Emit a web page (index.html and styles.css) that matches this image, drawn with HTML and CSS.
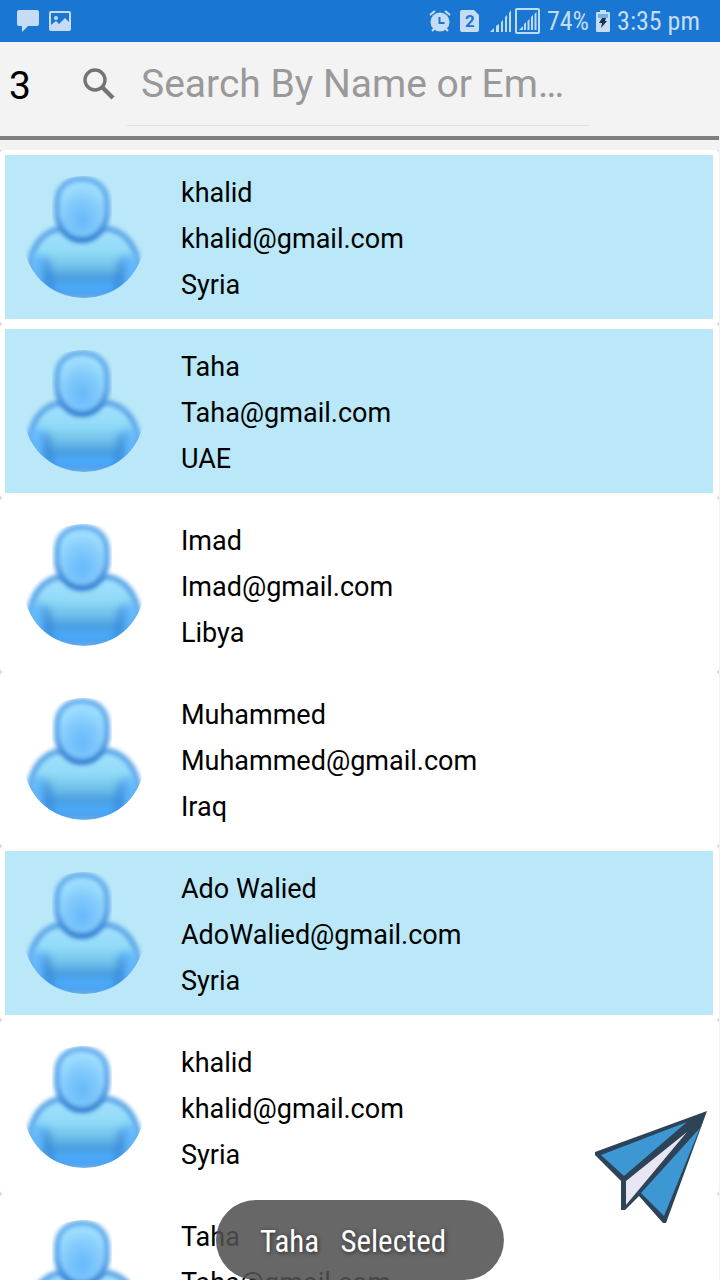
FILE: index.html
```
<!DOCTYPE html>
<html lang="en">
<head>
<meta charset="utf-8">
<meta name="viewport" content="width=device-width, initial-scale=1">
<title>Contacts</title>
<link rel="stylesheet" href="styles.css">
</head>
<body>
<svg class="sprite" width="0" height="0" aria-hidden="true">
  <defs>
    <linearGradient id="bodyFill" x1="0" y1="0" x2="0" y2="1">
      <stop offset="0" stop-color="#a4e2ff"/>
      <stop offset=".35" stop-color="#90daf7"/>
      <stop offset=".55" stop-color="#70c0ea"/>
      <stop offset=".72" stop-color="#4a9fe0"/>
      <stop offset=".88" stop-color="#4dabfc"/>
      <stop offset="1" stop-color="#3f93e6"/>
    </linearGradient>
    <radialGradient id="headFill" cx=".5" cy=".68" r=".62">
      <stop offset="0" stop-color="#66b9fb"/>
      <stop offset=".5" stop-color="#80c8fb"/>
      <stop offset="1" stop-color="#a2e2ff"/>
    </radialGradient>
    <linearGradient id="headEdge" x1="0" y1="0" x2="0" y2="1">
      <stop offset="0" stop-color="#68b0ee"/>
      <stop offset=".6" stop-color="#5ea8ea"/>
      <stop offset="1" stop-color="#2f7ed0"/>
    </linearGradient>
    <filter id="soft" x="-10%" y="-10%" width="120%" height="120%"><feGaussianBlur stdDeviation="2"/></filter>
    <filter id="softer" x="-80%" y="-30%" width="260%" height="160%"><feGaussianBlur stdDeviation="4"/></filter>
    <clipPath id="round"><circle cx="61" cy="61" r="61"/></clipPath>
    <symbol id="avatar" viewBox="0 0 122 122">
      <g clip-path="url(#round)">
        <path filter="url(#soft)" fill="url(#bodyFill)" stroke="#5fa8e8" stroke-width="6" d="M36 53C20 56 9 70 7 88c-1 17 1 33 9 33h91c7 0 9-16 8-33-2-18-13-32-29-35z"/>
        <path filter="url(#softer)" fill="none" stroke="#64b8ff" stroke-width="12" d="M15 112V80M106 112V80"/>
        <path filter="url(#softer)" fill="none" stroke="#2f7fd2" stroke-width="5" d="M28 126L23 84M94 126L99 84"/>
        <path filter="url(#soft)" stroke="#3184da" stroke-width="3" d="M28 121h66"/>
        <path filter="url(#soft)" fill="url(#headFill)" stroke="url(#headEdge)" stroke-width="6" d="M59 3C43 3 34 13 34 27v12c2 15 12 25 25 25s23-10 25-25V27C84 13 75 3 59 3z"/>
      </g>
    </symbol>
  </defs>
</svg>

<div class="screen">
  <header class="status">
    <div class="status-group">
      <svg width="24" height="24" viewBox="0 0 24 24" fill="#c5dcf4"><path d="M3 1h18a2 2 0 0 1 2 2v12a2 2 0 0 1-2 2H12l-6 6v-6H3a2 2 0 0 1-2-2V3a2 2 0 0 1 2-2z"/></svg>
      <svg width="22" height="20" viewBox="0 0 22 20"><rect x="1" y="1" width="20" height="18" rx="1" fill="none" stroke="#c5dcf4" stroke-width="2"/><circle cx="7" cy="7" r="2" fill="#c5dcf4"/><path fill="#c5dcf4" d="M2 14l5-4 3 3 6-6 4 4v7H2z"/></svg>
    </div>
    <div class="status-group status-right">
      <svg width="22" height="24" viewBox="0 0 22 24"><circle cx="11" cy="13" r="9.5" fill="#c5dcf4"/><path d="M1 6l5-4M21 6l-5-4M3 22l3-3M19 22l-3-3" stroke="#c5dcf4" stroke-width="2.2"/><path d="M10.500 8v6h5" fill="none" stroke="#1976d2" stroke-width="2"/></svg>
      <svg class="sim" width="20" height="22" viewBox="0 0 20 22"><path fill="#c5dcf4" d="M2 0h12l5 5v15a2 2 0 0 1-2 2H2a2 2 0 0 1-2-2V2a2 2 0 0 1 2-2z"/><text x="10" y="17" text-anchor="middle">2</text></svg>
      <svg class="signal" width="22" height="22" viewBox="0 0 22 22" fill="#bcdcf8"><path d="M0 22l4-4v4zM6 16l3-2v8H6zM11 12l2-2v12h-2zM15 7l2-2v17h-2zM19 3l2-3v22h-2z"/></svg>
      <svg width="25" height="26" viewBox="0 0 25 26"><rect x="1" y="1" width="23" height="24" rx="1" fill="none" stroke="#bcdcf8" stroke-width="2"/><path fill="#bcdcf8" d="M4 22l4-4v4zM9 16l2-2v8H9zM12.500 13l2-2v11h-2zM16 9l2-2v15h-2zM19.500 6l2-2v18h-2z"/></svg>
      <span>74%</span>
      <svg width="14" height="22" viewBox="0 0 14 22"><path fill="#c5dcf4" d="M4 0h6v2h3a1 1 0 0 1 1 1v18a1 1 0 0 1-1 1H1a1 1 0 0 1-1-1V3a1 1 0 0 1 1-1h3z"/><path fill="#74afe6" d="M2 4h10v4H2z"/><path fill="#17304f" d="M6 8h4l-1 3h2l-6 7 1-5H3z"/></svg>
      <span>3:35 pm</span>
    </div>
  </header>

  <form class="toolbar" role="search">
    <span class="count">3</span>
    <label class="search-icon" for="search" aria-label="Search"><svg width="32" height="32" viewBox="0 0 32 32" fill="none" stroke="#747474"><circle cx="12" cy="12" r="10" stroke-width="3.400"/><path d="M19 19l11 11" stroke-width="4.400"/></svg></label>
    <input class="search" id="search" type="text" placeholder="Search By Name or Em…">
  </form>

  <main class="list">
    <article class="card selected"><svg class="avatar"><use href="#avatar"/></svg><div class="info"><p>khalid</p><p>khalid@gmail.com</p><p>Syria</p></div></article>
    <article class="card selected"><svg class="avatar"><use href="#avatar"/></svg><div class="info"><p>Taha</p><p>Taha@gmail.com</p><p>UAE</p></div></article>
    <article class="card"><svg class="avatar"><use href="#avatar"/></svg><div class="info"><p>Imad</p><p>Imad@gmail.com</p><p>Libya</p></div></article>
    <article class="card"><svg class="avatar"><use href="#avatar"/></svg><div class="info"><p>Muhammed</p><p>Muhammed@gmail.com</p><p>Iraq</p></div></article>
    <article class="card selected"><svg class="avatar"><use href="#avatar"/></svg><div class="info"><p>Ado Walied</p><p>AdoWalied@gmail.com</p><p>Syria</p></div></article>
    <article class="card"><svg class="avatar"><use href="#avatar"/></svg><div class="info"><p>khalid</p><p>khalid@gmail.com</p><p>Syria</p></div></article>
    <article class="card"><svg class="avatar"><use href="#avatar"/></svg><div class="info"><p>Taha</p><p>Taha@gmail.com</p></div></article>
  </main>

  <button class="send" type="button" aria-label="Send">
    <svg width="112" height="112" viewBox="0 0 112 112"><path fill="#2c4358" d="M112 0L0 41v3l26 26v29h4l14-14 24 27h3z"/><path fill="#3c97d3" d="M6 44L92 11 29 65z"/><path fill="#e8e6f3" d="M31 70L92 21 31 94z"/><path fill="#3c97d3" d="M105 17L69 105 46 82z"/></svg>
  </button>
  <div class="toast" role="status">Taha &nbsp; Selected</div>
</div>
</body>
</html>
```
FILE: styles.css
```
* { box-sizing: border-box; }
body {
  margin: 0;
  background: #f3f3f3;
  color: #000;
  font-family: Roboto, "Liberation Sans", sans-serif;
}
.sprite { position: absolute; }
.screen {
  position: relative;
  height: 100vh;
  overflow: hidden;
}
.status {
  display: flex;
  justify-content: space-between;
  align-items: center;
  height: 42px;
  padding: 0 20px 0 16px;
  background: #1976d2;
  color: #c5dcf4;
  font-family: "Roboto Condensed", Roboto, sans-serif;
  font-size: 26px;
  line-height: 44px;
}
.status-group { display: flex; align-items: center; gap: 9px; }
.status-right { gap: 7px; }
.sim { margin: 0 3px 0 2px; }
.sim text { fill: #1976d2; font: 700 17px Roboto, sans-serif; }
.signal { margin-right: -4px; }
.toolbar {
  display: flex;
  align-items: flex-start;
  height: 98px;
  margin-right: 1px;
  border-bottom: 4px solid #7f7f7f;
}
.count {
  flex: none;
  width: 83px;
  padding-left: 9px;
  font-size: 39px;
  line-height: 88px;
}
.search-icon {
  flex: none;
  width: 44px;
  padding-top: 26px;
}
.search {
  flex: 1;
  min-width: 0;
  height: 84px;
  margin-right: 130px;
  padding: 0 14px;
  border: 0;
  border-bottom: 1px solid #e0e0e0;
  outline: 0;
  background: none;
  color: #000;
  font: 39px/84px Roboto, sans-serif;
}
.search::placeholder { color: #999; opacity: 1; }
.list {
  margin: 10px 1px 0 0;
  background: #d8d8d8;
}
.card {
  display: flex;
  align-items: center;
  gap: 36px;
  height: 174px;
  padding: 0 18px;
  border: 5px solid #fff;
  border-right-width: 6px;
  border-radius: 4px;
  background: #fff;
}
.selected { background: #bae8f8; }
.avatar { flex: none; width: 122px; height: 122px; }
.info {
  align-self: flex-start;
  padding-top: 15px;
  font-size: 27px;
  line-height: 46px;
}
.info p { margin: 0; }
.send {
  position: absolute;
  right: 13px;
  bottom: 57px;
  padding: 0;
  border: 0;
  background: none;
}
.send svg { display: block; }
.toast {
  position: absolute;
  left: 50%;
  bottom: 0;
  transform: translateX(-50%);
  height: 80px;
  padding: 0 58px 0 44px;
  border-radius: 40px;
  background: rgba(80, 80, 80, .87);
  color: #fff;
  font-family: "Roboto Condensed", Roboto, sans-serif;
  font-size: 31px;
  line-height: 84px;
  white-space: nowrap;
  text-shadow: 1px 1px 4px rgba(0, 0, 0, .6);
}
```
